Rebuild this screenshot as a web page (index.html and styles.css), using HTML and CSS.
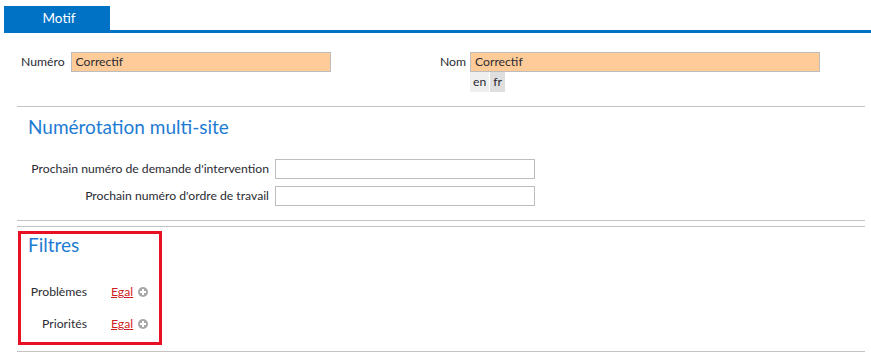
FILE: index.html
```html
<!DOCTYPE html>
<html lang="fr">
<head>
<meta charset="utf-8">
<title>Motif</title>
<link rel="stylesheet" href="styles.css">
</head>
<body>
<div class="tabs">
  <div class="tab">Motif</div>
</div>
<div class="tabbar"></div>
<div class="content">
  <div class="top">
    <div class="field">
      <label class="lbl">Numéro</label>
      <div class="input orange wide-l">Correctif</div>
    </div>
    <div class="field right">
      <label class="lbl">Nom</label>
      <div class="col">
        <div class="input orange wide-r">Correctif</div>
        <div class="langs"><span class="lang en">en</span><span class="lang fr">fr</span></div>
      </div>
    </div>
  </div>
  <div class="rule r1"></div>
  <h2 class="heading h-multi">Numérotation multi-site</h2>
  <div class="numgrid">
    <label class="lbl">Prochain numéro de demande d'intervention</label>
    <div class="input blank"></div>
    <label class="lbl">Prochain numéro d'ordre de travail</label>
    <div class="input blank"></div>
  </div>
  <div class="rule r2"></div>
  <div class="rule r3"></div>
  <div class="filters">
    <h2 class="heading h-filt">Filtres</h2>
    <div class="fgrid">
      <span class="lbl">Problèmes</span>
      <span class="val"><a class="link" href="#">Egal</a><span class="plus"></span></span>
      <span class="lbl">Priorités</span>
      <span class="val"><a class="link" href="#">Egal</a><span class="plus"></span></span>
    </div>
  </div>
  <div class="rule r4"></div>
</div>
</body>
</html>
```
FILE: styles.css
```css
html, body { margin: 0; padding: 0; background: #fff; }
body {
  font-family: "Lato", "Liberation Sans", sans-serif;
  font-size: 12.2px;
  color: #2b2b33;
  width: 871px;
  height: 355px;
  overflow: hidden;
}
.tabs { display: flex; padding: 6px 0 0 4px; }
.tab {
  width: 106px;
  height: 24px;
  background: #0072c6;
  color: #fff;
  font-size: 13.5px;
  display: flex;
  align-items: center;
  justify-content: center;
  padding-left: 4px;
  box-sizing: border-box;
}
.tabbar { height: 3px; background: #0072c6; margin-left: 4px; }
.content { padding: 0 6px 0 17px; }
.top { display: grid; grid-template-columns: 423px 1fr; padding-top: 19px; }
.field { display: flex; align-items: flex-start; gap: 6px; padding-left: 4px; }
.field.right { padding-left: 0; gap: 4px; }
.lbl { line-height: 20px; white-space: nowrap; }
.col { display: flex; flex-direction: column; }
.input {
  box-sizing: border-box;
  height: 20px;
  border: 1px solid #bdbdbd;
  padding: 0 4px;
  line-height: 18px;
}
.orange { background: #ffcc99; }
.wide-l { width: 260px; }
.wide-r { width: 350px; }
.langs { display: flex; }
.lang { height: 20px; line-height: 20px; padding: 0 3px; background: #efefef; }
.lang.fr { background: #dedede; margin-left: 1px; }
.rule { height: 1px; background: #c4c4c4; }
.r1 { margin-top: 14px; }
.heading {
  margin: 0;
  font-weight: 400;
  font-size: 19px;
  color: #1e7bd3;
  line-height: 26px;
}
.h-multi { margin: 7px 0 0 11px; }
.numgrid {
  display: grid;
  grid-template-columns: 252px 260px;
  column-gap: 6px;
  row-gap: 7px;
  margin-top: 19px;
}
.numgrid .lbl { text-align: right; }
.r2 { margin-top: 14px; }
.r3 { margin-top: 5px; }
.filters {
  margin: 4px 0 0 1px;
  width: 144px;
  height: 114px;
  box-sizing: border-box;
  border: 3px solid #e81123;
  padding: 0 0 0 7px;
}
.h-filt { margin-top: -2px; }
.fgrid {
  display: grid;
  grid-template-columns: 59px auto;
  column-gap: 24px;
  row-gap: 12px;
  margin-top: 24px;
}
.fgrid .lbl { text-align: right; }
.val { display: flex; align-items: center; gap: 5px; line-height: 20px; }
.link { color: #d01c1c; text-decoration: underline; }
.plus {
  width: 10px; height: 10px; border-radius: 50%;
  background: #a8a8a8; position: relative;
}
.plus::before, .plus::after {
  content: ""; position: absolute; background: #fff;
}
.plus::before { left: 2px; top: 4px; width: 6px; height: 2px; }
.plus::after { left: 4px; top: 2px; width: 2px; height: 6px; }
.r4 { margin-top: 6px; }
```
